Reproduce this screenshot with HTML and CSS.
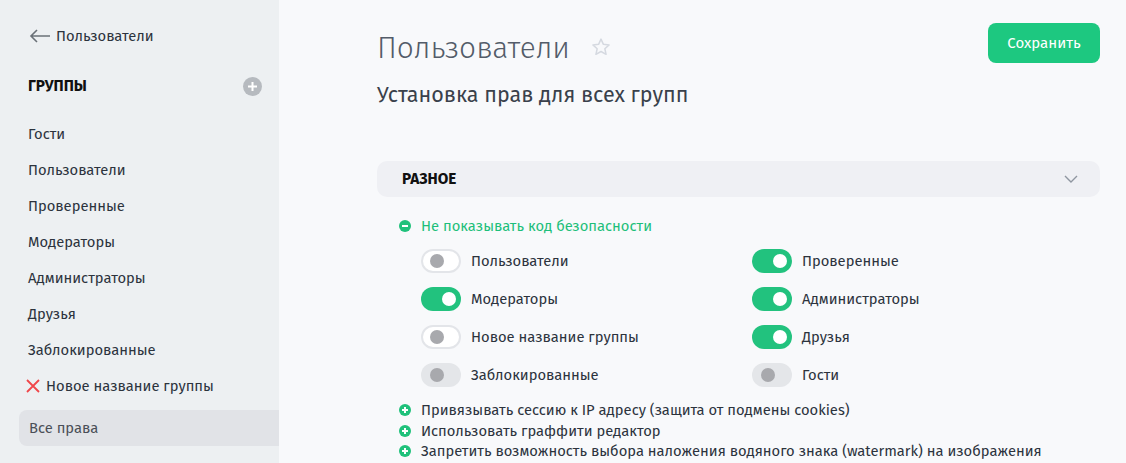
FILE: index.html
```html
<!DOCTYPE html>
<html lang="ru">
<head>
<meta charset="utf-8">
<link rel="stylesheet" href="styles.css">
</head>
<body>
<div class="layout">
  <aside class="sidebar">
    <a class="back">
      <svg width="22" height="14" viewBox="0 0 22 14"><path d="M21 7H2M8 1L2 7l6 6" fill="none" stroke="#6b7178" stroke-width="1.6"/></svg>
      <span>Пользователи</span>
    </a>
    <div class="groups-head">
      <span>ГРУППЫ</span>
      <svg width="19" height="19" viewBox="0 0 19 19"><circle cx="9.5" cy="9.5" r="9.5" fill="#b6babf"/><path d="M9.5 5v9M5 9.5h9" stroke="#fff" stroke-width="2"/></svg>
    </div>
    <ul class="groups">
      <li>Гости</li>
      <li>Пользователи</li>
      <li>Проверенные</li>
      <li>Модераторы</li>
      <li>Администраторы</li>
      <li>Друзья</li>
      <li>Заблокированные</li>
      <li class="new"><svg width="16" height="16" viewBox="0 0 16 16"><path d="M2 2l12 12M14 2L2 14" stroke="#f0464a" stroke-width="1.8"/></svg>Новое название группы</li>
    </ul>
    <div class="all">Все права</div>
  </aside>
  <main class="main">
    <div class="top">
      <div class="titles">
        <h1>Пользователи <svg class="star" width="20" height="20" viewBox="0 0 24 24"><path d="M12 2.5l2.9 6.3 6.8.7-5.1 4.6 1.5 6.7L12 17.4l-6.1 3.4 1.5-6.7-5.1-4.6 6.8-.7z" fill="none" stroke="#d5d9e0" stroke-width="1.8" stroke-linejoin="round"/></svg></h1>
        <h2>Установка прав для всех групп</h2>
      </div>
      <button class="save">Сохранить</button>
    </div>
    <section class="section">
      <div class="sec-head">
        <span>РАЗНОЕ</span>
        <svg width="14" height="8" viewBox="0 0 14 8"><path d="M1 1l6 6 6-6" fill="none" stroke="#8f96a0" stroke-width="1.4"/></svg>
      </div>
      <div class="opt open">
        <svg width="12" height="12" viewBox="0 0 12 12"><circle cx="6" cy="6" r="6" fill="#1fc17b"/><path d="M3 6h6" stroke="#fff" stroke-width="2"/></svg>
        <span>Не показывать код безопасности</span>
      </div>
      <div class="toggles">
        <label class="tg"><i class="sw off"></i>Пользователи</label>
        <label class="tg"><i class="sw on"></i>Проверенные</label>
        <label class="tg"><i class="sw on"></i>Модераторы</label>
        <label class="tg"><i class="sw on"></i>Администраторы</label>
        <label class="tg"><i class="sw off"></i>Новое название группы</label>
        <label class="tg"><i class="sw on"></i>Друзья</label>
        <label class="tg"><i class="sw dis"></i>Заблокированные</label>
        <label class="tg"><i class="sw dis"></i>Гости</label>
      </div>
      <ul class="opts">
        <li><svg width="12" height="12" viewBox="0 0 12 12"><circle cx="6" cy="6" r="6" fill="#1fc17b"/><path d="M3 6h6M6 3v6" stroke="#fff" stroke-width="2"/></svg>Привязывать сессию к IP адресу (защита от подмены cookies)</li>
        <li><svg width="12" height="12" viewBox="0 0 12 12"><circle cx="6" cy="6" r="6" fill="#1fc17b"/><path d="M3 6h6M6 3v6" stroke="#fff" stroke-width="2"/></svg>Использовать граффити редактор</li>
        <li><svg width="12" height="12" viewBox="0 0 12 12"><circle cx="6" cy="6" r="6" fill="#1fc17b"/><path d="M3 6h6M6 3v6" stroke="#fff" stroke-width="2"/></svg>Запретить возможность выбора наложения водяного знака (watermark) на изображения</li>
      </ul>
    </section>
  </main>
</div>
</body>
</html>
```
FILE: styles.css
```css
* { box-sizing: border-box; }
html, body { margin: 0; height: 100%; }
body {
  font-family: "Fira Sans", "Noto Sans", "Open Sans", sans-serif;
  font-size: 14.75px;
  color: #2c333d;
  background: #f8f9fb;
  overflow: hidden;
}
.layout { display: flex; height: 463px; }
.sidebar {
  width: 279px;
  flex: none;
  background: #edf0f2;
  padding: 25px 0 0 19px;
}
.back { display: flex; align-items: center; gap: 5px; padding-left: 10px; height: 22px; color: #2c333d; }
.groups-head {
  display: flex; justify-content: space-between; align-items: center;
  margin-top: 29px; padding: 0 17px 0 9px; height: 20px;
}
.groups-head span { font-weight: 700; font-size: 15.3px; color: #111; }
.groups { list-style: none; margin: 20px 0 0; padding: 0 0 0 9px; }
.groups li { height: 36px; display: flex; align-items: center; }
.groups li.new { margin-left: -3px; gap: 5px; }
.all {
  margin-top: 6px; height: 36px; background: #e1e3e7; border-radius: 8px 0 0 8px;
  display: flex; align-items: center; padding-left: 10px; color: #4a4f57;
}
.main { flex: 1; padding: 23px 26px 0 98px; }
.top { display: flex; justify-content: space-between; align-items: flex-start; }
.titles h1 {
  margin: 6px 0 0; font-size: 29.8px; font-weight: 300; color: #535c69; line-height: 38px;
  display: flex; align-items: center; gap: 14px;
}
.titles h1 .star { margin-left: 7px; margin-top: -2px; }
.titles h2 { margin: 15px 0 0; font-size: 21.5px; font-weight: 400; color: #3a414b; line-height: 26px; }
.save {
  width: 112px; height: 40px; border: 0; border-radius: 8px; background: #1dc880;
  color: #fff; font: inherit; font-size: 15px; cursor: pointer;
}
.section { margin-top: 53px; }
.sec-head {
  height: 36px; background: #eff0f4; border-radius: 10px;
  display: flex; justify-content: space-between; align-items: center;
  padding: 0 22px 0 25px;
}
.sec-head span { font-weight: 700; color: #111; font-size: 15.3px; }
.opt { display: flex; align-items: center; gap: 10px; margin: 19px 0 0 22px; height: 20px; }
.opt span { color: #1dbf7a; }
.toggles {
  display: grid; grid-template-columns: 331px 1fr; row-gap: 14px;
  margin: 13px 0 0 44px;
}
.tg { display: flex; align-items: center; gap: 10px; height: 24px; }
.sw {
  position: relative; width: 40px; height: 24px; border-radius: 12px; flex: none;
}
.sw::after {
  content: ""; position: absolute; top: 5px; width: 14px; height: 14px; border-radius: 50%;
}
.sw.off { background: #fff; border: 2px solid #e3e5e9; }
.sw.off::after { top: 3px; left: 7px; background: #a8a9ad; }
.sw.dis { background: #e4e6e9; }
.sw.dis::after { left: 9px; background: #a8a9ad; }
.sw.on { background: #22c27e; }
.sw.on::after { right: 5px; background: #fff; }
.opts { list-style: none; margin: 13px 0 0 22px; padding: 0; }
.opts li { display: flex; align-items: center; gap: 10px; height: 20.5px; }
```
